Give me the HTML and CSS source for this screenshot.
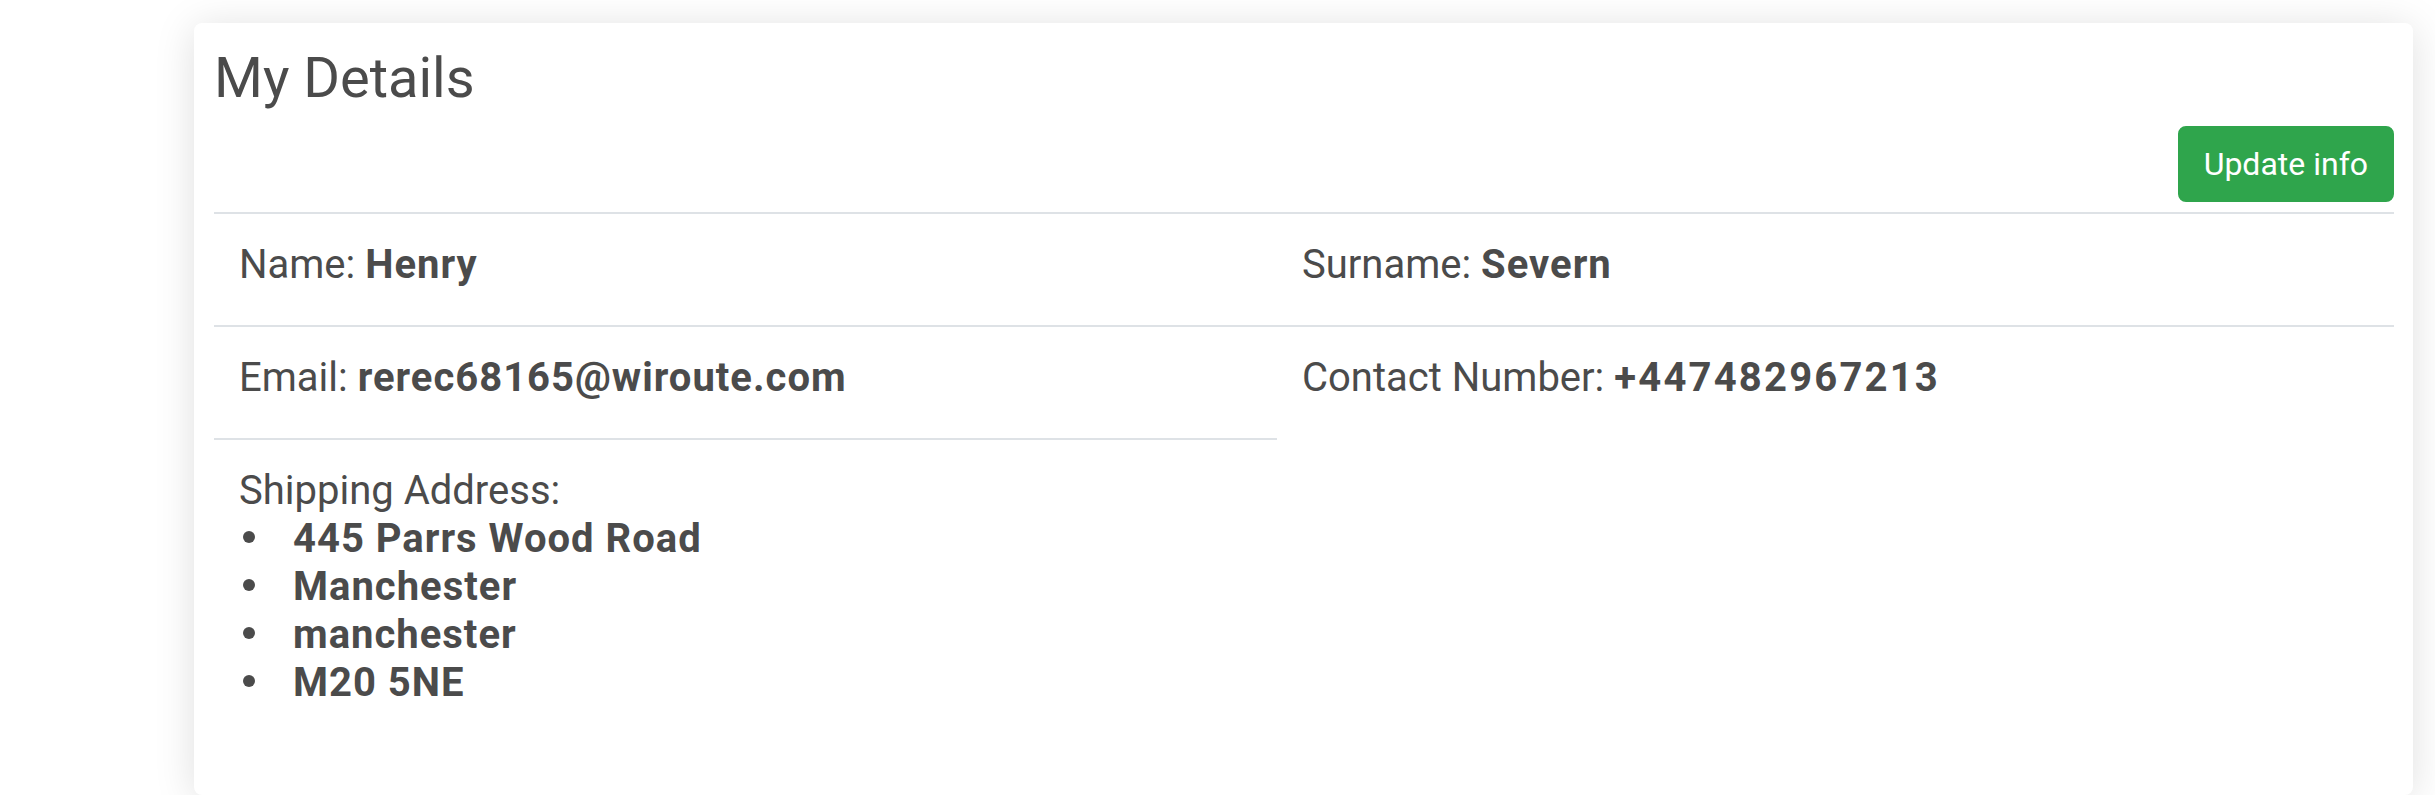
FILE: index.html
```html
<!DOCTYPE html>
<html lang="en">
<head>
<meta charset="utf-8">
<title>My Details</title>
<link rel="stylesheet" href="styles.css">
</head>
<body>
<div class="card">
  <h2 class="title">My Details</h2>
  <div class="toolbar">
    <button class="btn-update" type="button">Update info</button>
  </div>
  <div class="details">
    <div class="col col-left">
      <div class="item">Name: <strong>Henry</strong></div>
      <div class="item">Email: <strong>rerec68165@wiroute.com</strong></div>
      <div class="item last">
        <div>Shipping Address:</div>
        <ul class="address">
          <li><strong>445 Parrs Wood Road</strong></li>
          <li><strong>Manchester</strong></li>
          <li><strong>manchester</strong></li>
          <li><strong>M20 5NE</strong></li>
        </ul>
      </div>
    </div>
    <div class="col col-right">
      <div class="item">Surname: <strong>Severn</strong></div>
      <div class="item last">Contact Number: <strong class="num">+447482967213</strong></div>
    </div>
  </div>
</div>
</body>
</html>
```

FILE: styles.css
```css
html, body {
  margin: 0;
  padding: 0;
  background: #ffffff;
}

body {
  font-family: Roboto, "Liberation Sans", Arial, sans-serif;
  color: #4b4b4b;
}

.card {
  margin: 23px 22px 0 194px;
  padding: 20px 19px 20px 20px;
  background: #ffffff;
  border-radius: 8px;
  box-shadow: 0 4px 40px rgba(0, 0, 0, 0.13);
}

.title {
  margin: 0;
  font-size: 56px;
  font-weight: 400;
  line-height: 67px;
  padding-top: 2px;
  color: #4b4b4b;
}

.toolbar {
  display: flex;
  justify-content: flex-end;
  margin-top: 14px;
  padding-bottom: 10px;
  border-bottom: 2px solid #dee2e6;
}

.btn-update {
  font-family: Roboto, "Liberation Sans", Arial, sans-serif;
  font-size: 32px;
  line-height: 48px;
  padding: 12px 24px;
  color: #ffffff;
  background: #2fa54c;
  border: 2px solid #2fa54c;
  border-radius: 8px;
}

.details {
  display: grid;
  grid-template-columns: 1063px 1fr;
}

.item {
  padding: 27px 24px 36px 25px;
  font-size: 40px;
  line-height: 48px;
  border-bottom: 2px solid #dee2e6;
}

.item.last {
  border-bottom: none;
}

.item strong {
  font-weight: 700;
  letter-spacing: 1px;
}

.item strong.num {
  letter-spacing: 2.2px;
}

.address {
  list-style: none;
  margin: 0 0 32px 0;
  padding: 0;
}

.address li::before {
  content: "";
  display: inline-block;
  width: 12px;
  height: 12px;
  margin: 0 38px 0 4px;
  border-radius: 50%;
  background: currentColor;
  vertical-align: 9px;
}
```
